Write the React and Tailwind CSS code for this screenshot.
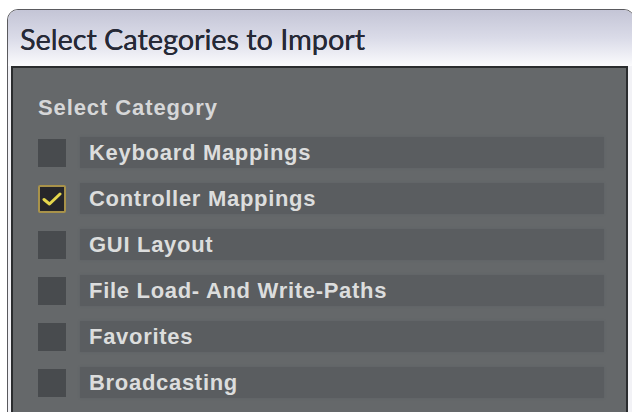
import React, { useState } from 'react';

const categories = [
  { name: 'Keyboard Mappings', checked: false },
  { name: 'Controller Mappings', checked: true },
  { name: 'GUI Layout', checked: false },
  { name: 'File Load- And Write-Paths', checked: false },
  { name: 'Favorites', checked: false },
  { name: 'Broadcasting', checked: false },
];

function CheckBox({ checked, onClick }) {
  if (checked) {
    return (
      <button
        onClick={onClick}
        className="w-[28px] h-[28px] shrink-0 flex items-center justify-center bg-[#26262a] border-2 border-[#a8924a] rounded-[2px]"
      >
        <svg width="20" height="16" viewBox="0 0 20 16">
          <path d="M2 8.5 L7.5 13 L18 3" fill="none" stroke="#e4d64c" strokeWidth="3" strokeLinecap="round" strokeLinejoin="round" />
        </svg>
      </button>
    );
  }
  return <button onClick={onClick} className="w-[28px] h-[28px] shrink-0 bg-[#484b4e]" />;
}

export default function App() {
  const [items, setItems] = useState(categories);

  const toggle = (i) => {
    setItems(items.map((c, idx) => (idx === i ? { ...c, checked: !c.checked } : c)));
  };

  return (
    <div className="w-[632px] h-[412px] overflow-hidden bg-white pt-[9px] pl-[7px]">
      <div className="w-[628px] h-[420px] flex flex-col border border-[#5a5a5e] rounded-t-[11px] bg-[#f2f2f6] px-[3px]">
        {/* title bar */}
        <div className="h-[56px] -mx-[3px] px-[12px] rounded-t-[10px] bg-gradient-to-b from-[#c4c5d6] via-[#dadbe8] to-[#fbfbfd] flex items-center">
          <h1 className="text-[29px] text-[#262936] font-['Lato',sans-serif] leading-none tracking-[-0.1px] mt-[1px] [text-shadow:0_0_0.5px_#262936]">
            Select Categories to Import
          </h1>
        </div>

        {/* panel */}
        <div className="flex-1 w-[617px] border-2 border-[#2a2c2e] bg-[#65686a] pl-[25px] pr-[22px] pt-[29px] font-['Liberation_Sans',Arial,sans-serif]">
          <p className="text-[22px] font-bold text-[#d6d7d8] tracking-[0.9px] leading-none">Select Category</p>

          <div className="mt-[18px] flex flex-col gap-[15px]">
            {items.map((c, i) => (
              <div key={c.name} className="flex items-center gap-[14px]">
                <CheckBox checked={c.checked} onClick={() => toggle(i)} />
                <div className="flex-1 h-[31px] bg-[#5a5d60] flex items-center pl-[9px] shadow-[0_0_2px_#5e6163]">
                  <span className="text-[22px] font-bold text-[#dcdddd] tracking-[0.7px] leading-none">{c.name}</span>
                </div>
              </div>
            ))}
          </div>
        </div>
      </div>
    </div>
  );
}
